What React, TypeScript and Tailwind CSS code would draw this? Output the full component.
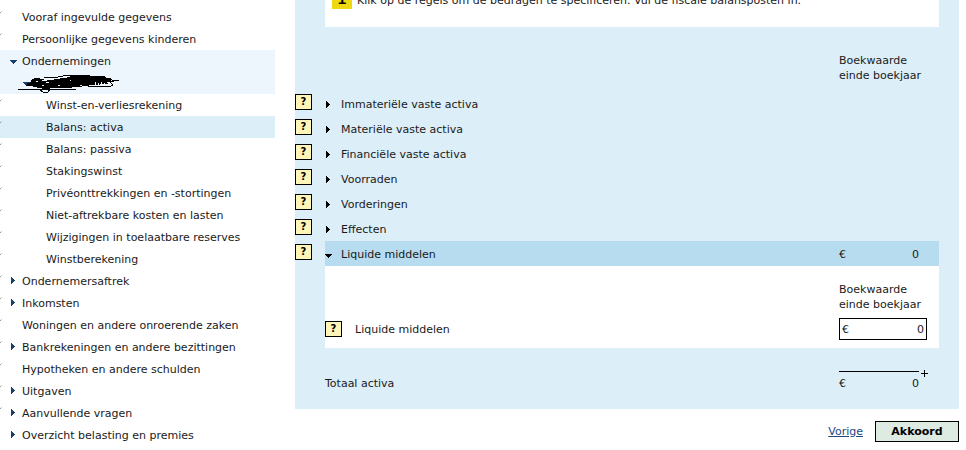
import React, { useState } from 'react';

type NavItem = {
  label: string;
  level: 1 | 3;
  arrow?: 'right' | 'down';
  visited?: boolean;
  state?: 'open' | 'current';
};

const topItems: NavItem[] = [
  { label: 'Vooraf ingevulde gegevens', level: 1, visited: true },
  { label: 'Persoonlijke gegevens kinderen', level: 1, visited: true },
  { label: 'Ondernemingen', level: 1, arrow: 'down', state: 'open' },
];

const restItems: NavItem[] = [
  { label: 'Winst-en-verliesrekening', level: 3, visited: true },
  { label: 'Balans: activa', level: 3, visited: true, state: 'current' },
  { label: 'Balans: passiva', level: 3, visited: true },
  { label: 'Stakingswinst', level: 3, visited: true },
  { label: 'Privéonttrekkingen en -stortingen', level: 3, visited: true },
  { label: 'Niet-aftrekbare kosten en lasten', level: 3, visited: true },
  { label: 'Wijzigingen in toelaatbare reserves', level: 3, visited: true },
  { label: 'Winstberekening', level: 3, visited: true },
  { label: 'Ondernemersaftrek', level: 1, arrow: 'right', visited: true },
  { label: 'Inkomsten', level: 1, arrow: 'right', visited: true },
  { label: 'Woningen en andere onroerende zaken', level: 1, visited: true },
  { label: 'Bankrekeningen en andere bezittingen', level: 1, arrow: 'right', visited: true },
  { label: 'Hypotheken en andere schulden', level: 1, visited: true },
  { label: 'Uitgaven', level: 1, arrow: 'right', visited: true },
  { label: 'Aanvullende vragen', level: 1, arrow: 'right', visited: true },
  { label: 'Overzicht belasting en premies', level: 1, arrow: 'right' },
];

const closedPosts = [
  'Immateriële vaste activa',
  'Materiële vaste activa',
  'Financiële vaste activa',
  'Voorraden',
  'Vorderingen',
  'Effecten',
];

const Arrow: React.FC<{ dir: 'right' | 'down' }> = ({ dir }) => (
  <svg width="8" height="8" viewBox="0 0 8 8" fill="currentColor" shapeRendering="crispEdges" aria-hidden="true">
    {dir === 'right' ? (
      <path d="M1 0h1v1h1v1h1v1h1v1h-1v1h-1v1h-1v1h-1z" />
    ) : (
      <path d="M0 3h7v1h-1v1h-1v1h-1v1h-1v-1h-1v-1h-1v-1h-1z" />
    )}
  </svg>
);

// Tail of the check mark that runs off the left edge
const Tick = () => (
  <svg width="2" height="22" viewBox="0 0 2 22" shapeRendering="crispEdges" aria-hidden="true">
    <path d="M0 6h1v1h-1z" fill="#999" />
    <path d="M1 5h1v1h-1z" fill="#ccc" />
  </svg>
);

const NavRow: React.FC<{ item: NavItem }> = ({ item }) => (
  <li
    className={`flex h-[22px] items-center ${
      item.state === 'current' ? 'bg-[#dceef8]' : item.state === 'open' ? 'bg-[#edf6fc]' : ''
    }`}
  >
    <span className="w-[10px] shrink-0">{item.visited && <Tick />}</span>
    <span className={`shrink-0 text-[#17406f] ${item.level === 3 ? 'w-9' : 'w-3'}`}>
      {item.arrow && <Arrow dir={item.arrow} />}
    </span>
    <a href="#" className="whitespace-nowrap hover:underline" aria-current={item.state === 'current' ? 'page' : undefined}>
      {item.label}
    </a>
  </li>
);

const Scribble = () => (
  <svg width="104" height="22" viewBox="0 0 104 22" fill="none" stroke="#000" shapeRendering="crispEdges" aria-hidden="true">
    <path d="M4 10h9v3h-6z" fill="#17406f" stroke="none" />
    <path d="M14 7l5-1 6 3 14-2 20-3h28v2h6v3l-5 1 2 2-16 1-14 2-22 1-12 1-10-2-8-3 5-2z" fill="#000" stroke="none" />
    <path d="M0 17h24M20 17h38M8 13h14M26 6l14-1 10-2h22M52 4h20M72 5h16M84 7l10 1 7 1M88 10l8-1M92 10l3 3-2 1H70M14 8l4-2 8 2M22 18l3 2h5l2-3M34 16l20-1M9 11l6 2" />
    <path d="M77 10v4M80 11v3M83 10v4M86 11v3M18 9h2M28 10h3" stroke="#edf6fc" />
    <path d="M24 13h2M40 13h2M52 8h1M62 13h2" stroke="#d7e3ef" />
  </svg>
);

const HelpButton: React.FC<{ topic: string }> = ({ topic }) => (
  <button
    type="button"
    aria-label={`Help bij ${topic}`}
    className="flex h-4 w-[17px] shrink-0 cursor-pointer items-center justify-center border border-black bg-[#fff5b8] text-[10px] leading-none font-bold text-black"
  >
    ?
  </button>
);

const ColumnHead = () => (
  <div className="ml-auto w-[100px] shrink-0 leading-[15px]">
    Boekwaarde
    <br />
    einde boekjaar
  </div>
);

const Amount: React.FC<{ value: string }> = ({ value }) => (
  <span className="flex w-20 justify-between">
    <span>€</span>
    <span>{value}</span>
  </span>
);

export default function App() {
  const [open, setOpen] = useState(true);
  const [amount, setAmount] = useState('0');

  return (
    <div className="flex min-h-screen gap-5 overflow-hidden bg-white font-['DejaVu_Sans',Verdana,sans-serif] text-[11px] leading-[15px] text-[#1a1a1a]">
      <nav className="w-[275px] shrink-0 pt-[6px]">
        <ul>
          {topItems.map((item) => (
            <NavRow key={item.label} item={item} />
          ))}
          <li className="flex h-[22px] bg-[#edf6fc] pl-[18px]">
            <Scribble />
          </li>
          {restItems.map((item) => (
            <NavRow key={item.label} item={item} />
          ))}
        </ul>
      </nav>

      <main className="mr-[7px] min-w-0 flex-1">
        <section className="bg-[#dceef8] pr-5 pb-[18px]">
          {/* Instruction, scrolled partly out of view */}
          <div className="-mt-[11px] ml-[30px] flex items-center gap-[5px] bg-white pb-[18px] pl-[7px]">
            <span className="flex h-5 w-5 shrink-0 items-center justify-center bg-[#eed811] font-['DejaVu_Sans_Mono',monospace] text-sm font-bold text-black">
              i
            </span>
            <p className="pt-[2px] whitespace-nowrap">
              Klik op de regels om de bedragen te specificeren. Vul de fiscale balansposten in.
            </p>
          </div>

          <div className="flex pt-[26px] pb-2">
            <ColumnHead />
          </div>

          {closedPosts.map((post) => (
            <div key={post} className="flex h-[25px] items-center">
              <div className="w-[30px] shrink-0 pb-[3px]">
                <HelpButton topic={post} />
              </div>
              <button type="button" className="flex cursor-pointer items-center gap-2 pt-[2px]">
                <span className="text-black">
                  <Arrow dir="right" />
                </span>
                {post}
              </button>
            </div>
          ))}

          <div className="flex h-[25px] items-center">
            <div className="w-[30px] shrink-0 pb-[3px]">
              <HelpButton topic="Liquide middelen" />
            </div>
            <div className="flex h-full flex-1 items-center bg-[#b8dcef] pt-[2px] pr-5">
              <button
                type="button"
                aria-expanded={open}
                onClick={() => setOpen(!open)}
                className="mr-auto flex cursor-pointer items-center gap-2"
              >
                <span className="text-black">
                  <Arrow dir={open ? 'down' : 'right'} />
                </span>
                Liquide middelen
              </button>
              <Amount value={amount} />
            </div>
          </div>

          {open && (
            <div className="ml-[30px] bg-white pt-4 pb-2">
              <div className="flex pb-[6px]">
                <ColumnHead />
              </div>
              <div className="flex items-center pr-3">
                <HelpButton topic="Liquide middelen" />
                <label htmlFor="liquide" className="mr-auto pl-[13px]">
                  Liquide middelen
                </label>
                <div className="flex h-[22px] w-[88px] items-center border border-black bg-white px-[2px]">
                  <span>€</span>
                  <input
                    id="liquide"
                    type="text"
                    value={amount}
                    onChange={(e) => setAmount(e.target.value)}
                    className="w-full min-w-0 text-right outline-none"
                  />
                </div>
              </div>
            </div>
          )}

          <div className="ml-[30px] flex items-end pt-[23px] pr-5">
            <span className="mr-auto">Totaal activa</span>
            <div className="relative w-20 border-t border-black pt-1">
              <svg
                className="absolute -top-[2px] left-[82px]"
                width="7"
                height="7"
                viewBox="0 0 7 7"
                fill="#000"
                shapeRendering="crispEdges"
                aria-hidden="true"
              >
                <path d="M3 0h1v7h-1zM0 3h7v1h-7z" />
              </svg>
              <Amount value={amount} />
            </div>
          </div>
        </section>

        <div className="flex items-center justify-end gap-3 pt-3">
          <a href="#" className="text-[#23477f] underline">
            Vorige
          </a>
          <button
            type="button"
            className="h-[21px] w-[84px] cursor-pointer border border-black bg-[#deebe2] font-bold text-black"
          >
            Akkoord
          </button>
        </div>
      </main>
    </div>
  );
}
